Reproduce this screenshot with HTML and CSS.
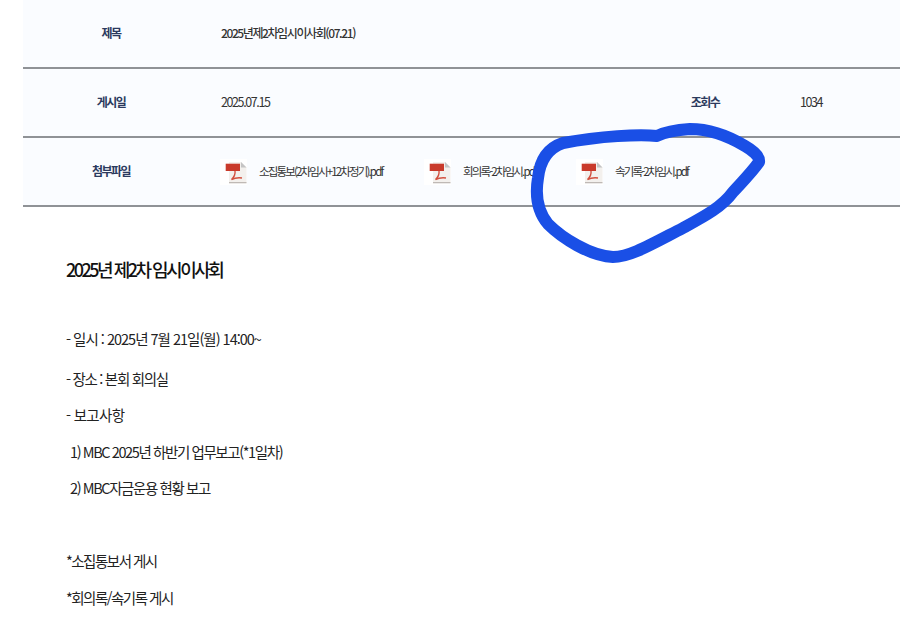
FILE: index.html
```html
<!DOCTYPE html>
<html lang="ko">
<head>
<meta charset="utf-8">
<title>2025년 제2차 임시이사회</title>
<link rel="stylesheet" href="styles.css">
</head>
<body>
<svg class="defs" width="0" height="0" aria-hidden="true">
  <symbol id="pdf" viewBox="0 0 27 26">
    <rect width="27" height="26" fill="#ffffff"/>
    <path d="M9 3H21L26.500 8.500V23.500H9Z" fill="#f3f0ed"/>
    <path d="M21 3L26.500 8.500H21Z" fill="#c4c4c4"/>
    <path d="M9 23H26.500V24.300H9Z" fill="#bfb9b5"/>
    <path d="M5.700 4.700H20V12H5.700Z" fill="#c93a2b"/>
    <path d="M15 12C15.500 15 14 18 11.500 20.500C14.500 19 18 18.500 22 19" fill="none" stroke="#d2503f" stroke-width="1.400"/>
  </symbol>
</svg>
<main class="page">
  <section class="info">
    <div class="row">
      <div class="label">제목</div>
      <div class="value subject">2025년제2차임시이사회(07.21)</div>
    </div>
    <div class="row">
      <div class="label">게시일</div>
      <div class="value date">2025.07.15</div>
      <div class="label views-label">조회수</div>
      <div class="value views">1034</div>
    </div>
    <div class="row">
      <div class="label">첨부파일</div>
      <div class="value files">
        <a class="file file-a"><svg class="pdf"><use href="#pdf"/></svg><span>소집통보(2차임시+12차정기).pdf</span></a>
        <a class="file file-b"><svg class="pdf"><use href="#pdf"/></svg><span>회의록-2차임시.pdf</span></a>
        <a class="file"><svg class="pdf"><use href="#pdf"/></svg><span>속기록-2차임시.pdf</span></a>
      </div>
    </div>
  </section>
  <article class="body">
    <h1>2025년 제2차 임시이사회</h1>
    <p class="first">- 일시 : 2025년 7월 21일(월) 14:00~</p>
    <p class="second">- 장소 : 본회 회의실</p>
    <p class="short">- 보고사항</p>
    <p class="sub">1) MBC 2025년 하반기 업무보고(*1일차)</p>
    <p class="sub">2) MBC자금운용 현황 보고</p>
    <p class="gap">*소집통보서 게시</p>
    <p>*회의록/속기록 게시</p>
  </article>
</main>
<svg class="scribble" viewBox="0 0 900 637" aria-hidden="true">
  <path d="M657 136C640 134 600 136 563 143C548 148 540 160 538 178C535 196 538 212 548 224C562 238 590 256 613 257C630 257 650 245 683 228C705 216 722 207 733 192C743 181 752 172 759 162C760 156 752 150 745 146C730 137 712 129 690 129C675 130 665 132 657 136Z"/>
</svg>
</body>
</html>
```
FILE: styles.css
```css
html, body {
  margin: 0;
  padding: 0;
  background: #ffffff;
}
body {
  position: relative;
  width: 900px;
  height: 637px;
  overflow: hidden;
  font-family: "Noto Sans CJK KR", "Noto Sans", sans-serif;
  color: #222222;
}
.defs {
  position: absolute;
}
.page {
  padding-left: 23px;
}
.info {
  background: #fafcff;
}
.row {
  display: flex;
  align-items: center;
  height: 65px;
  padding-bottom: 2px;
  border-bottom: 2px solid #8f9296;
}
.label {
  flex: none;
  width: 176px;
  text-align: center;
  font-size: 12px;
  font-weight: 700;
  letter-spacing: -1.600px;
  color: #2b3a5e;
}
.value {
  margin-left: 22px;
  font-size: 12.500px;
  font-weight: 400;
  letter-spacing: -1.400px;
  color: #333333;
}
.subject {
  font-size: 12px;
  font-weight: 500;
  letter-spacing: -1.400px;
}
.date {
  width: 454px;
}
.views-label {
  width: 60px;
  margin-left: 0;
}
.views {
  margin-left: 65px;
}
.files {
  display: flex;
  align-items: center;
  margin-left: 21px;
  letter-spacing: 0;
}
.file {
  display: flex;
  align-items: center;
  gap: 12px;
  font-size: 11.500px;
  letter-spacing: -1.850px;
  color: #333333;
}
.file-a {
  width: 204px;
}
.file-b {
  width: 152px;
}
.pdf {
  width: 27px;
  height: 26px;
  margin-top: 2px;
}
.body {
  padding-left: 43px;
  color: #222222;
}
h1 {
  margin: 48px 0 0;
  font-size: 18px;
  line-height: 28px;
  font-weight: 500;
  letter-spacing: -2.500px;
  color: #111111;
}
p {
  margin: 0;
  font-size: 14.500px;
  line-height: 36.600px;
  font-weight: 400;
  letter-spacing: -1.500px;
}
.first {
  margin-top: 38px;
  letter-spacing: -1px;
}
.second {
  margin-top: 3px;
  letter-spacing: -1.300px;
}
.short {
  letter-spacing: -0.700px;
}
.sub {
  padding-left: 4px;
  letter-spacing: -1.400px;
}
.gap {
  margin-top: 36.500px;
}
.scribble {
  position: absolute;
  top: 0;
  left: 0;
  width: 900px;
  height: 637px;
  fill: none;
  stroke: #1a4fe6;
  stroke-width: 12;
  stroke-linejoin: round;
}
```
